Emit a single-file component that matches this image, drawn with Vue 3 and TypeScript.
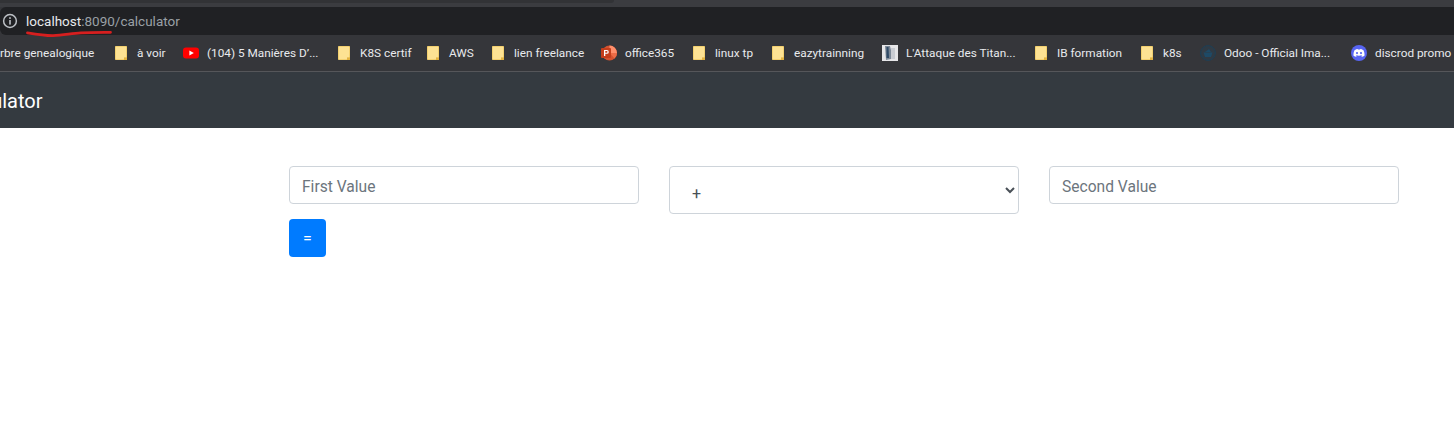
<script setup lang="ts">
type Bookmark = {
  label: string;
  icon: "folder" | "youtube" | "office" | "book" | "odoo" | "discord";
  width: number;
};

// widths are the slot each bookmark takes in the bar
const bookmarks: Bookmark[] = [
  { label: "à voir", icon: "folder", width: 69 },
  { label: "(104) 5 Manières D’...", icon: "youtube", width: 154 },
  { label: "K8S certif", icon: "folder", width: 89 },
  { label: "AWS", icon: "folder", width: 65 },
  { label: "lien freelance", icon: "folder", width: 110 },
  { label: "office365", icon: "office", width: 91 },
  { label: "linux tp", icon: "folder", width: 79 },
  { label: "eazytrainning", icon: "folder", width: 111 },
  { label: "L'Attaque des Titan...", icon: "book", width: 152 },
  { label: "IB formation", icon: "folder", width: 106 },
  { label: "k8s", icon: "folder", width: 60 },
  { label: "Odoo - Official Ima...", icon: "odoo", width: 151 },
  { label: "discrod promo", icon: "discord", width: 110 }
];

const operators = ["+", "-", "*", "/"];
</script>

<template>
  <div class="page">
    <header class="browser">
      <div class="tab-strip">
        <div class="tab-edge"></div>
      </div>
      <div class="address-bar">
        <svg class="info" viewBox="0 0 16 16" width="16" height="16">
          <circle cx="8" cy="8" r="6.4" fill="none" stroke="#bdc1c6" stroke-width="1.5" />
          <rect x="7.2" y="7" width="1.6" height="4.6" fill="#bdc1c6" />
          <rect x="7.2" y="4.2" width="1.6" height="1.7" fill="#bdc1c6" />
        </svg>
        <span class="url">
          <span class="host">localhost</span>:8090/calculator
          <svg class="scribble" viewBox="0 0 88 8" width="88" height="8">
            <path d="M1.500 2.800C10 4.200 20 5.800 27 5.600 37 5.400 45 3.400 55 2.800 65 2.400 75 2.400 84.500 2.300" fill="none" stroke="#d61f1f" stroke-width="2.800" stroke-linecap="round" />
          </svg>
        </span>
      </div>
      <nav class="bookmarks">
        <span class="first-mark">rbre genealogique</span>
        <span
          v-for="item in bookmarks"
          :key="item.label"
          class="mark"
          :class="{ 'mark-folder': item.icon === 'folder' }"
          :style="{ width: item.width + 'px' }"
        >
          <svg v-if="item.icon === 'folder'" viewBox="0 0 14 16" width="14" height="16">
            <path d="M1.500 1.500h11v13h-11z" fill="#fde293" stroke="#f3d06f" />
            <path d="M10 15v-2.600h3V15z" fill="#e3b341" />
          </svg>
          <svg v-else-if="item.icon === 'youtube'" viewBox="0 0 16 16" width="16" height="16">
            <rect x="0" y="2.500" width="16" height="11" rx="3" fill="#f00" />
            <path d="M6.400 5.400 10.800 8l-4.400 2.600z" fill="#fff" />
          </svg>
          <svg v-else-if="item.icon === 'office'" viewBox="0 0 16 16" width="16" height="16">
            <circle cx="8.500" cy="8" r="7.500" fill="#d35230" />
            <path d="M8.500.5a7.500 7.500 0 0 1 7.500 7.500H8.500z" fill="#ff8f6b" />
            <path d="M8.500 8H16a7.500 7.500 0 0 1-2.500 5.600L8.500 8z" fill="#ed6c47" />
            <rect x="0" y="3" width="10" height="10" rx="1" fill="#c43e1c" />
            <path d="M3 5h2.900a1.900 1.900 0 0 1 0 3.800H4.300V11H3zm1.300 1.100v1.600h1.400a.8.8 0 0 0 0-1.600z" fill="#fff" />
          </svg>
          <svg v-else-if="item.icon === 'book'" viewBox="0 0 16 16" width="16" height="16">
            <rect width="16" height="16" fill="#e6e6e8" />
            <path d="M3 1h5l1 4v9l-5 1z" fill="#7d8997" />
            <path d="M4.500 2h2l.5 11H4.500z" fill="#2f4a66" />
            <path d="M9 3h4v11H9z" fill="#c9ccd2" />
          </svg>
          <svg v-else-if="item.icon === 'odoo'" viewBox="0 0 16 16" width="16" height="16">
            <circle cx="8" cy="8" r="7.400" fill="#2f3a44" stroke="#1d3f56" />
            <path d="M3.500 7.500h9L11 12H5z" fill="#1e4a66" />
            <path d="M5 7 9 4l2 3z" fill="#1e4a66" />
          </svg>
          <svg v-else viewBox="0 0 16 16" width="16" height="16">
            <circle cx="8" cy="8" r="8" fill="#5865f2" />
            <path d="M3.500 5.200C4.800 4.300 6 4 6.600 3.900l.3.700h2.200l.3-.7c.6.100 1.800.4 3.100 1.300.8 1.700 1.100 3.400 1.100 5.200-1 .8-2 1.100-2.800 1.300l-.6-.9 1-.5-.3-.2c-1.800.8-4 .8-5.800 0l-.3.200 1 .5-.6.900c-.8-.2-1.800-.5-2.800-1.300 0-1.800.3-3.500 1.100-5.200z" fill="#fff" />
            <circle cx="6" cy="8.100" r="1.100" fill="#5865f2" />
            <circle cx="10" cy="8.100" r="1.100" fill="#5865f2" />
          </svg>
          <span>{{ item.label }}</span>
        </span>
      </nav>
    </header>

    <div class="navbar">
      <span class="brand">Calculator</span>
    </div>

    <main class="form-area">
      <div class="form-row">
        <input class="field" type="text" placeholder="First Value" />
        <select class="field select">
          <option v-for="op in operators" :key="op">{{ op }}</option>
        </select>
        <input class="field" type="text" placeholder="Second Value" />
      </div>
      <button class="submit" type="button">=</button>
    </main>
  </div>
</template>

<style>
html,
body {
  margin: 0;
  background: #fff;
  overflow: hidden;
}
</style>

<style scoped>
.page {
  width: 1454px;
  height: 448px;
  overflow: hidden;
  font-family: Roboto, "Open Sans", sans-serif;
}

.browser {
  background: #35363a;
}

.tab-strip {
  height: 7px;
  background: #3b3c40;
}

.tab-edge {
  width: 614px;
  height: 3px;
  background: #323336;
  border-bottom-right-radius: 3px;
}

.address-bar {
  display: flex;
  align-items: center;
  height: 28px;
  background: #202124;
  border-radius: 6px 0 0 6px;
}

.info {
  margin: 0 8px 0 2px;
}

.url {
  position: relative;
  font-size: 13.5px;
  color: #9aa0a6;
  white-space: pre;
}

.host {
  color: #e8eaed;
}

.scribble {
  position: absolute;
  left: 0;
  top: 17px;
}

.bookmarks {
  display: flex;
  align-items: center;
  height: 36px;
  background: #35363a;
  border-bottom: 1px solid #55565a;
  white-space: nowrap;
  font-size: 11.8px;
  color: #e8eaed;
}

.first-mark {
  width: 97px;
  margin-right: 17px;
  flex: none;
  overflow: hidden;
  direction: rtl;
  text-align: left;
}

.mark {
  display: flex;
  flex: none;
  align-items: center;
  gap: 8px;
}

.mark-folder {
  gap: 9px;
}

.mark svg {
  flex: none;
}

.navbar {
  display: flex;
  align-items: center;
  height: 56px;
  padding-top: 2px;
  box-sizing: border-box;
  background: #343a40;
}

.brand {
  margin-left: -48px;
  font-size: 20px;
  color: #fff;
}

.form-area {
  padding: 38px 0 0 289px;
}

.form-row {
  display: flex;
  align-items: flex-start;
  gap: 30px;
}

.field {
  box-sizing: border-box;
  width: 350px;
  height: 38px;
  padding: 8px 12px 4px;
  border: 1px solid #ced4da;
  border-radius: 4px;
  background: #fff;
  font-family: inherit;
  font-size: 15.6px;
  color: #495057;
}

.field::placeholder {
  color: #6c757d;
  opacity: 1;
}

.select {
  height: 48px;
  padding: 13px 12px 6px 18px;
  font-size: 16px;
}

.submit {
  display: block;
  box-sizing: border-box;
  width: 37px;
  height: 38px;
  margin-top: 5px;
  border: 0;
  border-radius: 4px;
  background: #007bff;
  font-family: inherit;
  font-size: 16px;
  color: #fff;
}
</style>
